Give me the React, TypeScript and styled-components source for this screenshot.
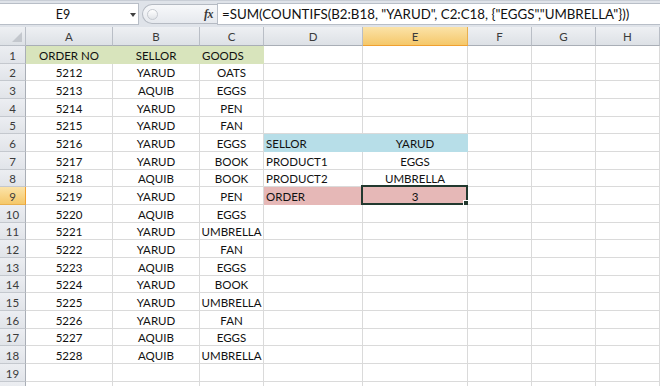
import React from "react";
import styled, { createGlobalStyle } from "styled-components";

const GlobalStyle = createGlobalStyle`
  html, body { margin: 0; padding: 0; background: #ffffff; overflow: hidden; }
  body { width: 660px; height: 386px; font-family: Lato, "Open Sans", sans-serif; }
`;

const Page = styled.div`
  width: 660px;
  height: 386px;
  overflow: hidden;
  display: flex;
  flex-direction: column;
  background: #dfe3e9;
`;

const FormulaBar = styled.div`
  display: flex;
  padding-top: 2px;
  padding-bottom: 2px;
  background: #dfe3e9;
  border-top: 1px solid #c9ced6;
  box-sizing: border-box;
  flex: 0 0 auto;
  height: 27px;
`;

const NameBox = styled.div`
  width: 139px;
  height: 22px;
  box-sizing: border-box;
  background: #fff;
  border: 1px solid #b8bec7;
  border-left: none;
  display: flex;
  align-items: center;
  font-size: 12.5px;
  color: #111;
`;

const NameText = styled.span`
  flex: 1;
  text-align: center;
  padding-left: 2px;
`;

const DropArrow = styled.span`
  width: 0;
  height: 0;
  border-left: 3px solid transparent;
  border-right: 3px solid transparent;
  border-top: 4px solid #404040;
  margin-right: 2px;
  margin-left: 6px;
  margin-top: 1px;
`;

const Splitter = styled.div`
  width: 78px;
  height: 22px;
  display: flex;
  align-items: center;
  padding-left: 3px;
  box-sizing: border-box;
`;

const Pill = styled.div`
  flex: 1;
  height: 20px;
  box-sizing: border-box;
  border: 1px solid #b5bac2;
  border-right: none;
  border-radius: 10px 0 0 10px;
  background: linear-gradient(#f7f8fa, #e6e9ee);
  display: flex;
  align-items: center;
  justify-content: space-between;
  padding-left: 4px;
  padding-right: 4px;
`;

const Grip = styled.span`
  width: 9px;
  height: 9px;
  border-radius: 50%;
  border: 1px solid #c5c9cf;
  background: linear-gradient(#ffffff, #e1e4e8);
`;

const Fx = styled.span`
  font-family: "Liberation Serif", serif;
  font-style: italic;
  font-weight: bold;
  font-size: 12px;
  color: #3a3a3a;
  letter-spacing: -0.5px;
`;

const FormulaInput = styled.div`
  flex: 1;
  height: 22px;
  box-sizing: border-box;
  background: #fff;
  border: 1px solid #b8bec7;
  border-right: none;
  display: flex;
  align-items: center;
  padding-left: 4px;
  font-size: 13.3px;
  color: #111;
  white-space: nowrap;
`;

const bounds = Array.from({ length: 22 }, (_, i) => Math.round(46 + i * 17.67));
const rowHeights = bounds.slice(1).map((b, i) => `${b - bounds[i]}px`).join(" ");

const Sheet = styled.div`
  display: grid;
  grid-template-columns: 26px 87px 87px 64px 99px 105px 64px 64px 64px;
  grid-template-rows: 19px ${rowHeights};
  background: #fff;
  font-size: 11.5px;
  color: #111;
`;

const Corner = styled.div`
  background: linear-gradient(#eef0f3, #dde1e6);
  border-right: 1px solid #b9bec6;
  border-bottom: 1px solid #b9bec6;
  position: relative;
  &::after {
    content: "";
    position: absolute;
    right: 3px;
    bottom: 3px;
    width: 0;
    height: 0;
    border-left: 10px solid transparent;
    border-bottom: 10px solid #c3c7cd;
  }
`;

const ColHead = styled.div<{ $sel?: boolean }>`
  display: flex;
  align-items: center;
  justify-content: center;
  padding-top: 1px;
  box-sizing: border-box;
  color: #3b3b3b;
  font-size: 11.5px;
  background: ${(p) =>
    p.$sel ? "linear-gradient(#fbe3a8, #f5c86a)" : "linear-gradient(#eef0f3, #dde1e6)"};
  border-right: 1px solid ${(p) => (p.$sel ? "#e9b04e" : "#b9bec6")};
  border-bottom: 1px solid ${(p) => (p.$sel ? "#f0a030" : "#a9aeb6")};
`;

const RowHead = styled.div<{ $sel?: boolean }>`
  display: flex;
  align-items: center;
  justify-content: center;
  padding-top: 1px;
  box-sizing: border-box;
  color: #3b3b3b;
  font-size: 11.5px;
  background: ${(p) =>
    p.$sel ? "linear-gradient(#fbe3a8, #f5c86a)" : "linear-gradient(#eceef2, #e1e4e9)"};
  border-right: 1px solid ${(p) => (p.$sel ? "#f0a030" : "#a9aeb6")};
  border-bottom: 1px solid ${(p) => (p.$sel ? "#e9b04e" : "#c4c8ce")};
`;

const Cell = styled.div<{ $bg?: string; $align?: "left" | "center"; $active?: boolean }>`
  display: flex;
  align-items: center;
  justify-content: ${(p) => (p.$align === "left" ? "flex-start" : "center")};
  padding: 1px 2px 0 2px;
  box-sizing: border-box;
  white-space: nowrap;
  overflow: visible;
  position: relative;
  background: ${(p) => p.$bg || "#fff"};
  border-right: 1px solid ${(p) => p.$bg || "#dadada"};
  border-bottom: 1px solid ${(p) => p.$bg || "#dadada"};
  ${(p) =>
    p.$active
      ? `
    &::before {
      content: "";
      position: absolute;
      left: -2px; top: -2px; right: -1px; bottom: -1px;
      border: 2px solid #22392f;
      pointer-events: none;
    }
    &::after {
      content: "";
      position: absolute;
      right: -3px; bottom: -3px;
      width: 5px; height: 5px;
      background: #22392f;
      border: 1px solid #fff;
    }
  `
      : ""}
`;

const GREEN = "#d8e4bc";
const BLUE = "#b7dee8";
const RED = "#e6b8b7";

type C = { t?: string; bg?: string; align?: "left" | "center"; active?: boolean };

const data: [string, string, string][] = [
  ["5212", "YARUD", "OATS"],
  ["5213", "AQUIB", "EGGS"],
  ["5214", "YARUD", "PEN"],
  ["5215", "YARUD", "FAN"],
  ["5216", "YARUD", "EGGS"],
  ["5217", "YARUD", "BOOK"],
  ["5218", "AQUIB", "BOOK"],
  ["5219", "YARUD", "PEN"],
  ["5220", "AQUIB", "EGGS"],
  ["5221", "YARUD", "UMBRELLA"],
  ["5222", "YARUD", "FAN"],
  ["5223", "AQUIB", "EGGS"],
  ["5224", "YARUD", "BOOK"],
  ["5225", "YARUD", "UMBRELLA"],
  ["5226", "YARUD", "FAN"],
  ["5227", "AQUIB", "EGGS"],
  ["5228", "AQUIB", "UMBRELLA"],
];

const side: Record<number, [C, C]> = {
  6: [{ t: "SELLOR", bg: BLUE, align: "left" }, { t: "YARUD", bg: BLUE }],
  7: [{ t: "PRODUCT1", align: "left" }, { t: "EGGS" }],
  8: [{ t: "PRODUCT2", align: "left" }, { t: "UMBRELLA" }],
  9: [{ t: "ORDER", bg: RED, align: "left" }, { t: "3", bg: RED, active: true }],
};

function buildRow(r: number): C[] {
  const cells: C[] = [];
  if (r === 1) {
    cells.push({ t: "ORDER NO", bg: GREEN }, { t: "SELLOR", bg: GREEN }, { t: "GOODS", bg: GREEN, align: "left" });
  } else if (r >= 2 && r <= 18) {
    const d = data[r - 2];
    cells.push({ t: d[0] }, { t: d[1] }, { t: d[2] });
  } else {
    cells.push({}, {}, {});
  }
  if (side[r]) cells.push(side[r][0], side[r][1]);
  else cells.push({}, {});
  cells.push({}, {}, {});
  return cells;
}

const cols = ["A", "B", "C", "D", "E", "F", "G", "H"];

export default function App() {
  const rows = Array.from({ length: 20 }, (_, i) => i + 1);
  return (
    <Page>
      <GlobalStyle />
      <FormulaBar>
        <NameBox>
          <NameText>E9</NameText>
          <DropArrow />
        </NameBox>
        <Splitter>
          <Pill>
            <Grip />
            <Fx>fx</Fx>
          </Pill>
        </Splitter>
        <FormulaInput>=SUM(COUNTIFS(B2:B18, "YARUD", C2:C18, {"{"}"EGGS","UMBRELLA"{"}"}))</FormulaInput>
      </FormulaBar>
      <Sheet>
        <Corner />
        {cols.map((c) => (
          <ColHead key={c} $sel={c === "E"}>
            {c}
          </ColHead>
        ))}
        {rows.map((r) => (
          <React.Fragment key={r}>
            <RowHead $sel={r === 9}>{r < 20 ? r : ""}</RowHead>
            {buildRow(r).map((c, i) => (
              <Cell key={i} $bg={c.bg} $align={c.align} $active={c.active}>
                {c.t}
              </Cell>
            ))}
          </React.Fragment>
        ))}
      </Sheet>
    </Page>
  );
}
